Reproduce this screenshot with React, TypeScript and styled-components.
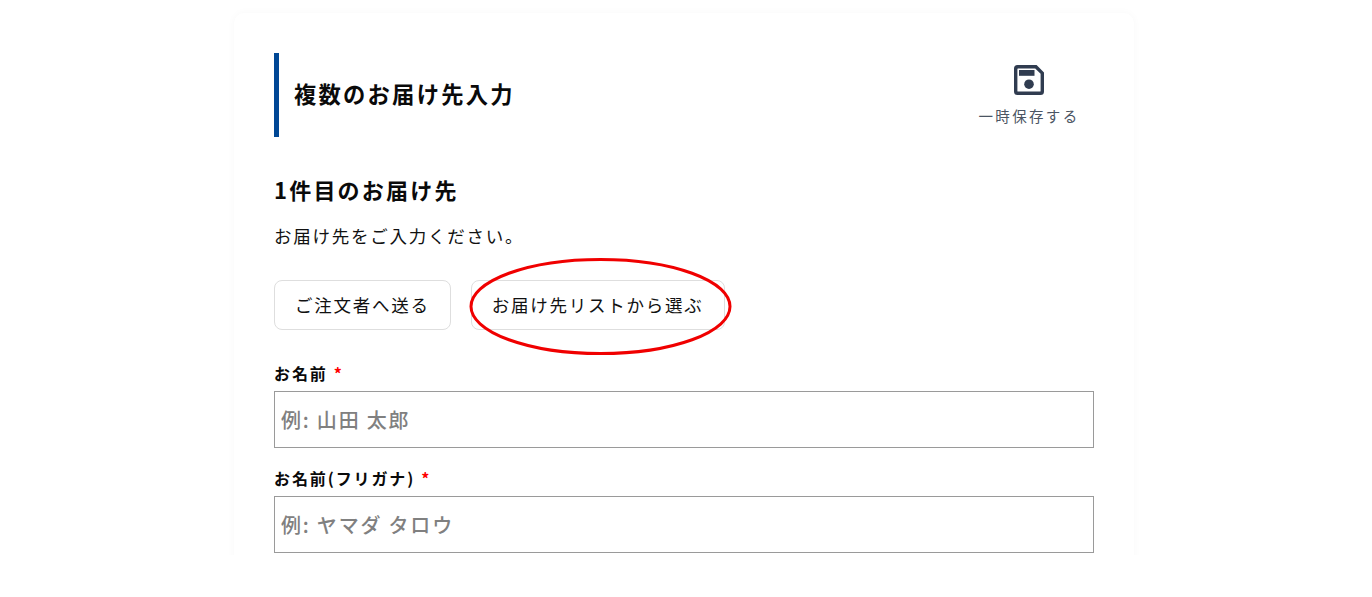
import React from "react";
import styled, { createGlobalStyle } from "styled-components";

const Global = createGlobalStyle`
  html, body { margin: 0; padding: 0; background: #fff; }
  body { font-family: "Noto Sans CJK JP", "Noto Sans", sans-serif; color: #111; }
`;

const Viewport = styled.div`
  position: relative;
  width: 1372px;
  height: 597px;
  overflow: hidden;
  background: #fff;
`;

const Clip = styled.div`
  height: 555px;
  overflow: hidden;
  padding-top: 13px;
  box-sizing: border-box;
`;

const Card = styled.main`
  width: 900px;
  margin-left: 234px;
  padding: 40px 40px 60px;
  box-sizing: border-box;
  background: #fff;
  border-radius: 10px;
  box-shadow: 0 0 8px rgba(0, 0, 0, 0.03);
`;

const Header = styled.header`
  display: flex;
  align-items: flex-start;
  justify-content: space-between;
  height: 84px;
`;

const Title = styled.h1`
  margin: 0;
  height: 84px;
  box-sizing: border-box;
  border-left: 5px solid #004795;
  padding: 0 0 4px 15px;
  display: flex;
  align-items: center;
  font-size: 22.3px;
  font-weight: 700;
  letter-spacing: 2.23px;
  color: #0a0a0a;
`;

const SaveButton = styled.button`
  display: flex;
  flex-direction: column;
  align-items: center;
  gap: 10px;
  width: 116px;
  margin: 11px 7px 0 0;
  padding: 0;
  border: 0;
  background: none;
  font: inherit;
  font-size: 14.5px;
  line-height: 20px;
  letter-spacing: 2.35px;
  color: #4b5563;
`;

const SectionTitle = styled.h2`
  margin: 36px 0 0;
  font-size: 22px;
  line-height: 32px;
  font-weight: 700;
  letter-spacing: 2.2px;
  color: #0a0a0a;
`;

const Lead = styled.p`
  margin: 18px 0 0;
  font-size: 17.5px;
  line-height: 26px;
  letter-spacing: 1.75px;
  color: #111;
`;

const ButtonRow = styled.div`
  display: flex;
  gap: 20px;
  margin-top: 31px;
`;

const ChoiceButton = styled.button`
  height: 50px;
  padding: 0 20px 2px;
  background: #fff;
  border: 1px solid #dedede;
  border-radius: 8px;
  font: inherit;
  font-size: 17.5px;
  letter-spacing: 1.75px;
  color: #111;
  white-space: nowrap;
`;

const Field = styled.div`
  display: flex;
  flex-direction: column;
  gap: 5px;
  margin-top: ${(p: { $top: number }) => p.$top}px;
`;

const Label = styled.label`
  display: flex;
  gap: 6px;
  height: 25px;
  line-height: 25px;
  font-size: 16px;
  font-weight: 700;
  letter-spacing: 1.9px;
  color: #0a0a0a;
`;

const Required = styled.span`
  color: #f00;
`;

const Input = styled.input`
  width: 820px;
  height: 57px;
  box-sizing: border-box;
  padding: 0 6px 1px;
  border: 1px solid #9a9a9a;
  border-radius: 0;
  outline: none;
  background: #fff;
  font: inherit;
  font-size: 20px;
  font-weight: 500;
  letter-spacing: 1.8px;
  color: #111;
  &::placeholder { color: #808080; opacity: 1; }
`;

const Annotation = styled.svg`
  position: absolute;
  left: 468px;
  top: 257px;
  pointer-events: none;
`;

const SaveIcon = () => (
  <svg width="32" height="32" viewBox="0 0 32 32" aria-hidden="true">
    <path
      fillRule="evenodd"
      fill="#303c50"
      d="M4.5 1H23.6L31 8.4V27.5A3.5 3.5 0 0 1 27.5 31H4.5A3.5 3.5 0 0 1 1 27.5V4.5A3.5 3.5 0 0 1 4.5 1ZM5 4.4A.6.6 0 0 0 4.4 5V27A.6.6 0 0 0 5 27.6H27A.6.6 0 0 0 27.6 27V9.8L22.2 4.4Z"
    />
    <rect x="6" y="6" width="15.5" height="5.8" fill="#303c50" />
    <circle cx="16" cy="20.2" r="4.8" fill="#303c50" />
  </svg>
);

export default function App() {
  return (
    <Viewport>
      <Global />
      <Clip>
        <Card>
          <Header>
            <Title>複数のお届け先入力</Title>
            <SaveButton type="button">
              <SaveIcon />
              一時保存する
            </SaveButton>
          </Header>
          <SectionTitle>1件目のお届け先</SectionTitle>
          <Lead>お届け先をご入力ください。</Lead>
          <ButtonRow>
            <ChoiceButton type="button">ご注文者へ送る</ChoiceButton>
            <ChoiceButton type="button">お届け先リストから選ぶ</ChoiceButton>
          </ButtonRow>
          <Field $top={31}>
            <Label>
              お名前 <Required>*</Required>
            </Label>
            <Input placeholder="例: 山田 太郎" />
          </Field>
          <Field $top={18}>
            <Label>
              お名前(フリガナ) <Required>*</Required>
            </Label>
            <Input placeholder="例: ヤマダ タロウ" />
          </Field>
        </Card>
      </Clip>
      <Annotation width="266" height="100" viewBox="0 0 266 100" aria-hidden="true">
        <ellipse cx="132.5" cy="49.5" rx="129.5" ry="47" fill="none" stroke="#f00000" strokeWidth="3" />
      </Annotation>
    </Viewport>
  );
}
